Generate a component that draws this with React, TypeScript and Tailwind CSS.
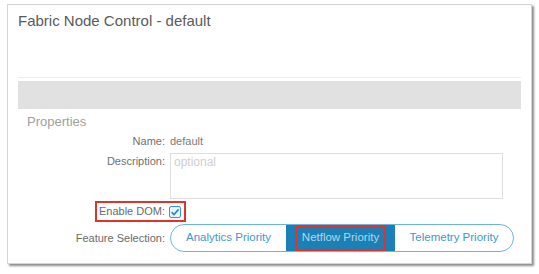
export default function App() {
  return (
    <div className="h-[274px] w-[539px] bg-white pl-[7px] pt-[4px] font-['Liberation_Sans',Arial,sans-serif]">
      <div className="h-[260px] w-[525px] border border-[#d4d4d4] bg-white px-[10px] shadow-[2px_2px_2px_rgba(0,0,0,0.45)]">
        <h1 className="pt-[6px] text-[15px] leading-[20px] text-[#5a5a5a]">
          Fabric Node Control - default
        </h1>
        <div className="mt-[46px] h-px bg-[#ececec]" />
        <div className="mt-[3px] h-[28px] bg-[#e1e1e1]" />

        <p className="mt-[5px] pl-[9px] text-[13px] leading-[16px] text-[#a0a0a0]">
          Properties
        </p>

        <div className="mt-[4px] flex h-[14px] items-center text-[11px] text-[#707070]">
          <span className="w-[147px] text-right">Name:</span>
          <span className="ml-[5px] text-[#7a7a7a]">default</span>
        </div>

        <div className="mt-[5px] flex text-[11px] text-[#707070]">
          <span className="w-[147px] pt-[1px] text-right leading-[14px]">Description:</span>
          <div className="ml-[5px] h-[46px] w-[333px] border border-[#dedede] px-[3px] pt-[1px] text-[12px] leading-[14px] text-[#cfcfcf]">
            optional
          </div>
        </div>

        <div className="mt-[2px] flex h-[21px] text-[11px] text-[#6a6a6a]">
          <div className="flex w-[168px] justify-end">
            <div className="flex h-[21px] items-center gap-[4px] border-2 border-[#e2332b] pl-[2px] pr-[3px]">
              <span>Enable DOM:</span>
              <svg width="12" height="12" viewBox="0 0 12 12">
                <rect x="0.5" y="0.5" width="11" height="11" rx="1.5" fill="#eaf4fb" stroke="#3b97d3" />
                <path d="M2.6 6.2 L5 8.5 L9.6 3.4" fill="none" stroke="#2a86c6" strokeWidth="1.6" />
              </svg>
            </div>
          </div>
        </div>

        <div className="mt-[2px] flex h-[28px] items-center text-[11px] text-[#6a6a6a]">
          <span className="w-[147px] text-right">Feature Selection:</span>
          <div className="ml-[5px] flex h-[28px] overflow-hidden rounded-full border border-[#6db5df] text-[11.5px]">
            <div className="flex w-[115px] items-center justify-center text-[#3d98cf]">
              Analytics Priority
            </div>
            <div className="flex w-[109px] items-center justify-center bg-[#1b80b6]">
              <div className="flex h-[25px] w-[91px] items-center justify-center border-2 border-[#e2332b] text-[#b6d6e8]">
                Netflow Priority
              </div>
            </div>
            <div className="flex w-[118px] items-center justify-center text-[#3d98cf]">
              Telemetry Priority
            </div>
          </div>
        </div>
      </div>
    </div>
  );
}
